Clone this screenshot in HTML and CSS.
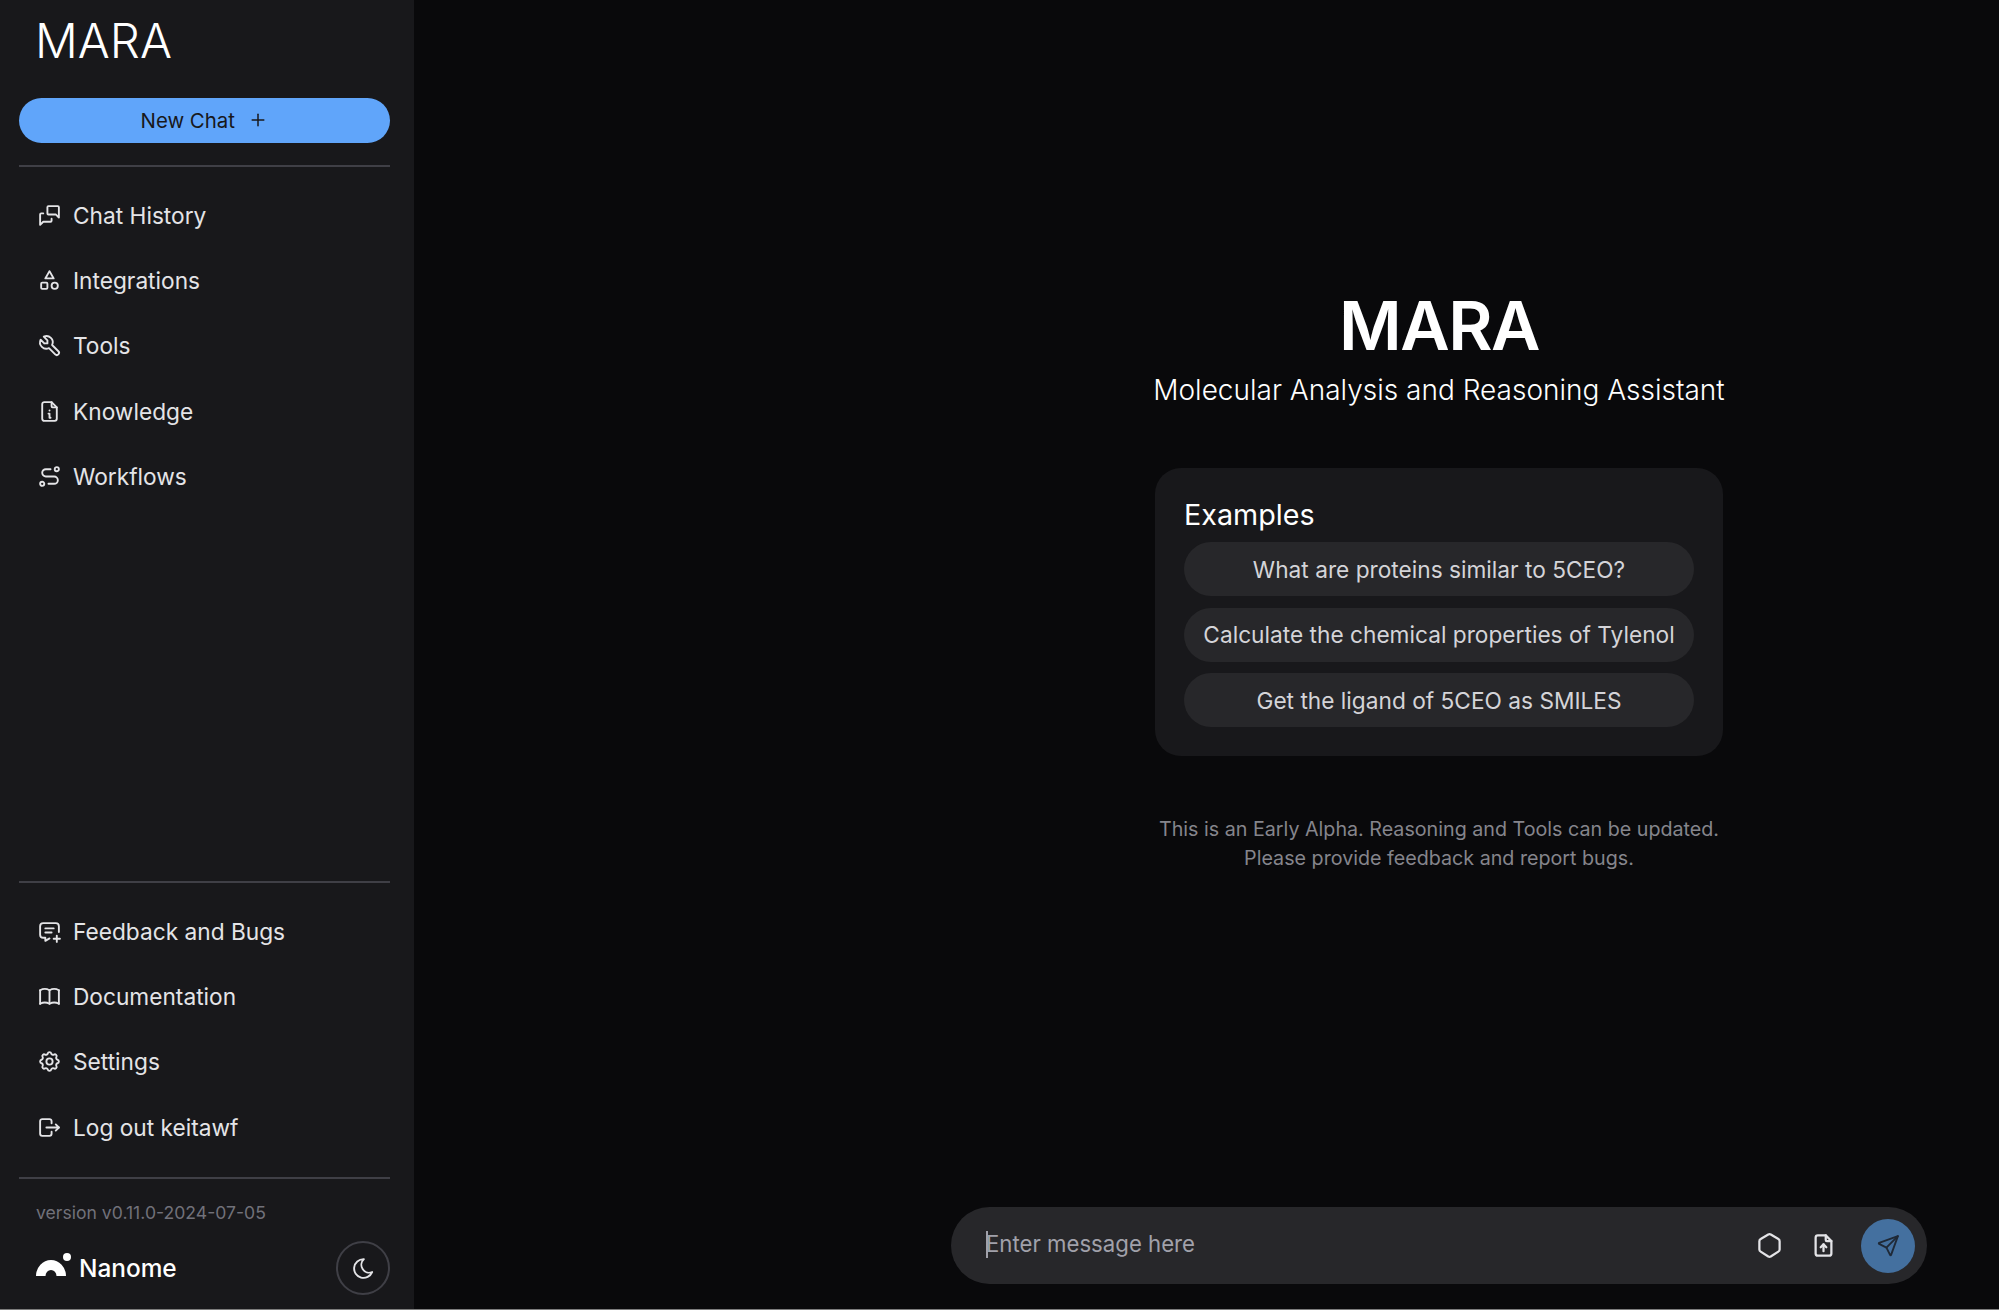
FILE: index.html
```html
<!DOCTYPE html>
<html lang="en">
<head>
  <meta charset="UTF-8">
  <title>MARA</title>
  <link rel="stylesheet" href="styles.css">
</head>
<body>
  <div class="app">
    <aside class="sidebar">
      <div class="logo">MARA</div>
      <button class="new-chat">New Chat
        <svg class="icon plus" viewBox="0 0 24 24"><path d="M12 5v14"/><path d="M5 12h14"/></svg>
      </button>
      <hr class="divider">
      <nav class="nav">
        <a class="nav-link" href="#">
          <svg class="icon" viewBox="0 0 24 24"><path d="M21 14l-3 -3h-7a1 1 0 0 1 -1 -1v-6a1 1 0 0 1 1 -1h9a1 1 0 0 1 1 1v10"/><path d="M14 15v2a1 1 0 0 1 -1 1h-7l-3 3v-10a1 1 0 0 1 1 -1h2"/></svg>
          Chat History
        </a>
        <a class="nav-link" href="#">
          <svg class="icon" viewBox="0 0 24 24"><path d="M12 3l-4 7h8z"/><circle cx="17" cy="17" r="3"/><path d="M4 15a1 1 0 0 1 1 -1h4a1 1 0 0 1 1 1v4a1 1 0 0 1 -1 1h-4a1 1 0 0 1 -1 -1z"/></svg>
          Integrations
        </a>
        <a class="nav-link" href="#">
          <svg class="icon" viewBox="0 0 24 24"><path d="M7 10h3v-3l-3.5 -3.5a6 6 0 0 1 8 8l6 6a2 2 0 0 1 -3 3l-6 -6a6 6 0 0 1 -8 -8l3.5 3.5"/></svg>
          Tools
        </a>
        <a class="nav-link" href="#">
          <svg class="icon" viewBox="0 0 24 24"><path d="M14 3v4a1 1 0 0 0 1 1h4"/><path d="M17 21h-10a2 2 0 0 1 -2 -2v-14a2 2 0 0 1 2 -2h7l5 5v11a2 2 0 0 1 -2 2z"/><path d="M11 14h1v4h1"/><path d="M12 11h.01"/></svg>
          Knowledge
        </a>
        <a class="nav-link" href="#">
          <svg class="icon" viewBox="0 0 24 24"><circle cx="5" cy="19" r="2"/><circle cx="19" cy="5" r="2"/><path d="M11 19h5.5a3.5 3.5 0 0 0 0 -7h-8a3.5 3.5 0 0 1 0 -7h4.5"/></svg>
          Workflows
        </a>
      </nav>
      <div class="spacer"></div>
      <hr class="divider">
      <nav class="nav">
        <a class="nav-link" href="#">
          <svg class="icon" viewBox="0 0 24 24"><path d="M8 9h8"/><path d="M8 13h6"/><path d="M12.01 18.594l-4.01 2.406v-3h-2a3 3 0 0 1 -3 -3v-8a3 3 0 0 1 3 -3h12a3 3 0 0 1 3 3v5.5"/><path d="M16 19h6"/><path d="M19 16v6"/></svg>
          Feedback and Bugs
        </a>
        <a class="nav-link" href="#">
          <svg class="icon" viewBox="0 0 24 24"><path d="M3 19a9 9 0 0 1 9 0a9 9 0 0 1 9 0"/><path d="M3 6a9 9 0 0 1 9 0a9 9 0 0 1 9 0"/><path d="M3 6v13"/><path d="M12 6v13"/><path d="M21 6v13"/></svg>
          Documentation
        </a>
        <a class="nav-link" href="#">
          <svg class="icon" viewBox="0 0 24 24"><path d="M10.325 4.317c.426 -1.756 2.924 -1.756 3.35 0a1.724 1.724 0 0 0 2.573 1.066c1.543 -.94 3.31 .826 2.37 2.37a1.724 1.724 0 0 0 1.065 2.572c1.756 .426 1.756 2.924 0 3.35a1.724 1.724 0 0 0 -1.066 2.573c.94 1.543 -.826 3.31 -2.37 2.37a1.724 1.724 0 0 0 -2.572 1.065c-.426 1.756 -2.924 1.756 -3.35 0a1.724 1.724 0 0 0 -2.573 -1.066c-1.543 .94 -3.31 -.826 -2.37 -2.37a1.724 1.724 0 0 0 -1.065 -2.572c-1.756 -.426 -1.756 -2.924 0 -3.35a1.724 1.724 0 0 0 1.066 -2.573c-.94 -1.543 .826 -3.31 2.37 -2.37c1 .608 2.296 .07 2.572 -1.065z"/><circle cx="12" cy="12" r="3"/></svg>
          Settings
        </a>
        <a class="nav-link" href="#">
          <svg class="icon" viewBox="0 0 24 24"><path d="M14 8v-2a2 2 0 0 0 -2 -2h-7a2 2 0 0 0 -2 2v12a2 2 0 0 0 2 2h7a2 2 0 0 0 2 -2v-2"/><path d="M9 12h12l-3 -3"/><path d="M18 15l3 -3"/></svg>
          Log out keitawf
        </a>
      </nav>
      <hr class="divider">
      <div class="version">version v0.11.0-2024-07-05</div>
      <div class="brand-row">
        <div class="brand">
          <svg class="brand-mark" viewBox="0 0 36 23"><path d="M0 23a15 16 0 0 1 30 0h-9.5a5.5 6 0 0 0 -11 0z"/><circle cx="31" cy="4" r="4"/></svg>
          Nanome
        </div>
        <button class="theme-toggle">
          <svg class="icon" viewBox="0 0 24 24"><path d="M12 3c.132 0 .263 0 .393 0a7.5 7.5 0 0 0 7.92 12.446a9 9 0 1 1 -8.313 -12.454z"/></svg>
        </button>
      </div>
    </aside>

    <main class="main">
      <h1 class="title">MARA</h1>
      <p class="subtitle">Molecular Analysis and Reasoning Assistant</p>
      <section class="examples">
        <h2>Examples</h2>
        <button class="example">What are proteins similar to 5CEO?</button>
        <button class="example">Calculate the chemical properties of Tylenol</button>
        <button class="example">Get the ligand of 5CEO as SMILES</button>
      </section>
      <p class="notice">This is an Early Alpha. Reasoning and Tools can be updated.<br>Please provide feedback and report bugs.</p>

      <div class="composer">
        <span class="caret"></span>
        <span class="placeholder">Enter message here</span>
        <svg class="icon composer-icon" viewBox="0 0 24 24"><path d="M19.875 6.27a2.225 2.225 0 0 1 1.125 1.948v7.284c0 .809 -.443 1.555 -1.158 1.948l-6.75 4.27a2.269 2.269 0 0 1 -2.184 0l-6.75 -4.27a2.225 2.225 0 0 1 -1.158 -1.948v-7.285c0 -.809 .443 -1.554 1.158 -1.947l6.75 -3.98a2.33 2.33 0 0 1 2.25 0l6.75 3.98z"/></svg>
        <svg class="icon composer-icon" viewBox="0 0 24 24"><path d="M14 3v4a1 1 0 0 0 1 1h4"/><path d="M17 21h-10a2 2 0 0 1 -2 -2v-14a2 2 0 0 1 2 -2h7l5 5v11a2 2 0 0 1 -2 2z"/><path d="M12 11v6"/><path d="M9.5 13.5l2.5 -2.5l2.5 2.5"/></svg>
        <button class="send">
          <svg class="icon" viewBox="0 0 24 24"><path d="M10 14l11 -11"/><path d="M21 3l-6.5 18a.55 .55 0 0 1 -1 0l-3.5 -7l-7 -3.5a.55 .55 0 0 1 0 -1l18 -6.5"/></svg>
        </button>
      </div>
    </main>
  </div>
</body>
</html>
```
FILE: styles.css
```css
* {
  box-sizing: border-box;
}
body {
  margin: 0;
  background: #09090b;
  font-family: Inter, "Liberation Sans", sans-serif;
  color: #e4e4e7;
}
button {
  font-family: inherit;
  border: none;
  cursor: pointer;
}
.app {
  display: flex;
  height: 1310px;
  border-bottom: 1px solid #7d7d7d;
}
.icon {
  width: 25px;
  height: 25px;
  flex: none;
  fill: none;
  stroke: currentColor;
  stroke-width: 1.8;
  stroke-linecap: round;
  stroke-linejoin: round;
}

/* sidebar */
.sidebar {
  width: 414px;
  flex: none;
  display: flex;
  flex-direction: column;
  padding: 0 24px 14px 18.5px;
  background: #18181b;
}
.logo {
  height: 97.5px;
  padding: 12px 0 0 16.5px;
  font-size: 47.5px;
  line-height: 58px;
  font-weight: 300;
  color: #fff;
}
.new-chat {
  height: 45px;
  display: flex;
  align-items: center;
  justify-content: center;
  gap: 13px;
  background: #60a5fa;
  border-radius: 23px;
  font-size: 20.4px;
  color: #18181b;
}
.plus {
  width: 20px;
  height: 20px;
}
.divider {
  width: 100%;
  height: 2px;
  margin: 0;
  border: none;
  background: #3f3f46;
}
.new-chat + .divider {
  margin-top: 22.5px;
}
.nav {
  display: flex;
  flex-direction: column;
  padding: 15.5px 0 16.5px;
}
.nav-link {
  height: 65.4px;
  display: flex;
  align-items: center;
  gap: 11px;
  padding-left: 18.5px;
  font-size: 22.7px;
  color: #e4e4e7;
  text-decoration: none;
}
.spacer {
  flex: 1;
}
.version {
  margin-top: 23.5px;
  padding-left: 17.5px;
  font-size: 17.6px;
  line-height: 22px;
  color: #71717a;
}
.brand-row {
  display: flex;
  align-items: center;
  justify-content: space-between;
  margin-top: 17px;
}
.brand {
  display: flex;
  align-items: center;
  gap: 7px;
  padding-left: 17.5px;
  font-size: 24.4px;
  font-weight: 500;
  color: #fff;
}
.brand-mark {
  width: 36px;
  height: 23px;
  margin-top: -8px;
  fill: #fff;
}
.theme-toggle {
  width: 54px;
  height: 54px;
  display: flex;
  align-items: center;
  justify-content: center;
  background: none;
  border: 2px solid #3f3f46;
  border-radius: 50%;
  color: #e4e4e7;
}

/* main column */
.main {
  flex: 1;
  display: flex;
  flex-direction: column;
  padding: 278px 72px 25px 537px;
  text-align: center;
}
.title {
  margin: 0;
  font-size: 68px;
  line-height: 94px;
  font-weight: 600;
  letter-spacing: -1.5px;
  color: #fff;
}
.subtitle {
  margin: 0;
  font-size: 28px;
  line-height: 36px;
  font-weight: 300;
  color: #fff;
}
.examples {
  width: 568px;
  margin: 60px auto 0;
  display: flex;
  flex-direction: column;
  gap: 11.5px;
  padding: 29px 29px 29px;
  background: #18181b;
  border-radius: 26px;
}
.examples h2 {
  margin: 0 0 -2.5px;
  font-size: 28.7px;
  line-height: 36px;
  font-weight: 400;
  color: #fff;
  text-align: left;
}
.example {
  height: 54px;
  background: #27272a;
  border-radius: 27px;
  font-size: 22.7px;
  color: #d4d4d8;
}
.notice {
  margin: 59px 0 0;
  font-size: 19.7px;
  line-height: 29px;
  color: #85858c;
}
.composer {
  height: 77px;
  margin-top: auto;
  display: flex;
  align-items: center;
  padding: 0 12px 0 35px;
  background: #27272a;
  border-radius: 39px;
  text-align: left;
}
.caret {
  width: 2px;
  height: 27px;
  margin: 0 -2px 2px 0;
  background: #a1a1aa;
}
.placeholder {
  flex: 1;
  padding-bottom: 5px;
  font-size: 22.2px;
  color: #a1a1aa;
}
.composer-icon {
  width: 27px;
  height: 27px;
  margin-right: 27px;
  stroke-width: 2;
  color: #e4e4e7;
}
.composer-icon + .send {
  margin-left: -2.5px;
}
.send {
  width: 54px;
  height: 54px;
  flex: none;
  display: flex;
  align-items: center;
  justify-content: center;
  background: #44709f;
  border-radius: 50%;
  color: #1f2937;
}
```
